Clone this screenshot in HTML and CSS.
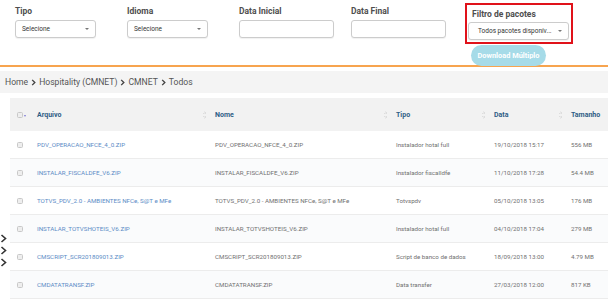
FILE: index.html
```html
<!DOCTYPE html>
<html lang="pt-BR">
<head>
  <meta charset="UTF-8">
  <title>Pacotes - CMNET</title>
  <link rel="stylesheet" href="styles.css">
</head>
<body>
  <header class="filters">
    <div class="field w-select">
      <label>Tipo</label>
      <div class="select"><span>Selecione</span><i class="caret"></i></div>
    </div>
    <div class="field w-select">
      <label>Idioma</label>
      <div class="select"><span>Selecione</span><i class="caret"></i></div>
    </div>
    <div class="field w-date">
      <label>Data Inicial</label>
      <div class="input"></div>
    </div>
    <div class="field w-date">
      <label>Data Final</label>
      <div class="input"></div>
    </div>
    <div class="field-pack">
      <div class="highlight">
        <label>Filtro de pacotes</label>
        <div class="select"><span>Todos pacotes disponív...</span><i class="caret"></i></div>
      </div>
      <button class="btn-download">Download Múltiplo</button>
    </div>
  </header>

  <nav class="breadcrumb">
    <span>Home</span>
    <svg class="sep" viewBox="0 0 5 8"><path d="M1 1l3 3-3 3" /></svg>
    <span>Hospitality (CMNET)</span>
    <svg class="sep" viewBox="0 0 5 8"><path d="M1 1l3 3-3 3" /></svg>
    <span>CMNET</span>
    <svg class="sep" viewBox="0 0 5 8"><path d="M1 1l3 3-3 3" /></svg>
    <span>Todos</span>
  </nav>

  <div class="side-toggle">
    <svg viewBox="0 0 7 9"><path d="M1.5 1l4 3.5-4 3.5" /></svg>
    <svg viewBox="0 0 7 9"><path d="M1.5 1l4 3.5-4 3.5" /></svg>
    <svg viewBox="0 0 7 9"><path d="M1.5 1l4 3.5-4 3.5" /></svg>
  </div>

  <main class="content">
    <table class="files">
      <colgroup>
        <col class="c-check"><col class="c-file"><col class="c-name"><col class="c-type"><col class="c-date"><col class="c-size">
      </colgroup>
      <thead>
        <tr>
          <th><span class="cb"></span><i class="cb-caret"></i></th>
          <th class="sort">Arquivo</th>
          <th class="sort">Nome</th>
          <th class="sort">Tipo</th>
          <th class="sort">Data</th>
          <th>Tamanho</th>
        </tr>
      </thead>
      <tbody>
        <tr>
          <td><span class="cb"></span></td>
          <td><a href="#">PDV_OPERACAO_NFCE_4_0.ZIP</a></td>
          <td>PDV_OPERACAO_NFCE_4_0.ZIP</td>
          <td>Instalador hotal full</td>
          <td>19/10/2018 15:17</td>
          <td>556 MB</td>
        </tr>
        <tr>
          <td><span class="cb"></span></td>
          <td><a href="#">INSTALAR_FISCALDFE_V6.ZIP</a></td>
          <td>INSTALAR_FISCALDFE_V6.ZIP</td>
          <td>Instalador fiscalldfe</td>
          <td>11/10/2018 17:28</td>
          <td>54.4 MB</td>
        </tr>
        <tr>
          <td><span class="cb"></span></td>
          <td><a href="#">TOTVS_PDV_2.0 - AMBIENTES NFCe, S@T e MFe</a></td>
          <td>TOTVS_PDV_2.0 - AMBIENTES NFCe, S@T e MFe</td>
          <td>Totvspdv</td>
          <td>05/10/2018 13:05</td>
          <td>176 MB</td>
        </tr>
        <tr>
          <td><span class="cb"></span></td>
          <td><a href="#">INSTALAR_TOTVSHOTEIS_V6.ZIP</a></td>
          <td>INSTALAR_TOTVSHOTEIS_V6.ZIP</td>
          <td>Instalador hotal full</td>
          <td>04/10/2018 17:04</td>
          <td>279 MB</td>
        </tr>
        <tr>
          <td><span class="cb"></span></td>
          <td><a href="#">CMSCRIPT_SCR201809013.ZIP</a></td>
          <td>CMSCRIPT_SCR201809013.ZIP</td>
          <td>Script de banco de dados</td>
          <td>18/09/2018 13:00</td>
          <td>4.79 MB</td>
        </tr>
        <tr>
          <td><span class="cb"></span></td>
          <td><a href="#">CMDATATRANSF.ZIP</a></td>
          <td>CMDATATRANSF.ZIP</td>
          <td>Data transfer</td>
          <td>27/03/2018 12:00</td>
          <td>817 KB</td>
        </tr>
      </tbody>
    </table>
  </main>
</body>
</html>
```

FILE: styles.css
```css
body {
  font-family: Roboto, "Liberation Sans", Arial, sans-serif;
  background: #fff;
  color: #666;
  margin: 0;
  padding: 0;
  width: 608px;
  height: 302px;
  overflow: hidden;
  position: relative;
}

/* filter bar */
.filters {
  display: flex;
  align-items: flex-start;
  padding: 6px 0 0 15px;
  height: 59px;
  border-bottom: 2px solid #f7a44f;
}
.field {
  display: flex;
  flex-direction: column;
}
.field.w-select {
  width: 81px;
  margin-right: 31px;
}
.field.w-date {
  width: 95px;
  margin-right: 17px;
}
.field.w-date + .field.w-date {
  margin-right: 19px;
}
label {
  font-size: 8.5px;
  font-weight: bold;
  color: #4e4e4e;
  height: 14px;
  line-height: 11px;
}
.select, .input {
  box-sizing: border-box;
  height: 18px;
  border: 1px solid #ccc;
  border-radius: 3px;
  background: #fff;
  box-shadow: 0 1px 1px rgba(0,0,0,0.06);
}
.select {
  display: flex;
  align-items: center;
  justify-content: space-between;
  padding: 0 6px 0 6px;
  font-size: 6.5px;
  color: #333;
}
.caret {
  width: 0;
  height: 0;
  border-left: 2px solid transparent;
  border-right: 2px solid transparent;
  border-top: 2.5px solid #777;
}

.field-pack {
  display: flex;
  flex-direction: column;
  align-items: flex-start;
  margin-top: -3px;
}
.highlight {
  width: 108px;
  box-sizing: border-box;
  border: 2px solid #e0121a;
  padding: 4px 2px 2px 1px;
  display: flex;
  flex-direction: column;
}
.highlight label {
  padding-left: 4px;
  height: 13px;
}
.highlight .select {
  padding-left: 9px;
}
.btn-download {
  margin: 1px 0 0 6px;
  width: 75px;
  height: 21px;
  border: 0;
  border-radius: 11px;
  background: #a6dbe8;
  color: #fff;
  font-family: inherit;
  font-size: 7.4px;
  font-weight: bold;
  padding: 0;
}

/* breadcrumb */
.breadcrumb {
  margin-top: 4px;
  height: 22px;
  background: #f4f4f4;
  display: flex;
  align-items: center;
  gap: 3px;
  padding-left: 5px;
  font-size: 8.6px;
  color: #555;
}
.breadcrumb .sep {
  width: 5px;
  height: 7px;
  fill: none;
  stroke: #444;
  stroke-width: 1.6;
}

/* table */
.content {
  padding: 5px 0 0 10px;
}
.files {
  width: 598px;
  table-layout: fixed;
  border-collapse: collapse;
}
.c-check { width: 22px; }
.c-file { width: 178px; }
.c-name { width: 181px; }
.c-type { width: 98px; }
.c-date { width: 77px; }
.c-size { width: 42px; }

.files th {
  background: #f2f2f2;
  height: 33px;
  padding: 0 0 0 5px;
  text-align: left;
  font-size: 7px;
  font-weight: bold;
  color: #2f5d86;
  white-space: nowrap;
  position: relative;
}
.files th.sort::after {
  content: "";
  position: absolute;
  right: 4px;
  top: 13px;
  width: 3px;
  height: 8px;
  background:
    linear-gradient(to bottom right, transparent 50%, #ddd 50%) left top / 1.5px 3px no-repeat,
    linear-gradient(to bottom left, transparent 50%, #ddd 50%) right top / 1.5px 3px no-repeat,
    linear-gradient(to top right, transparent 50%, #ddd 50%) left bottom / 1.5px 3px no-repeat,
    linear-gradient(to top left, transparent 50%, #ddd 50%) right bottom / 1.5px 3px no-repeat;
}
.files td {
  height: 27px;
  padding: 0 0 0 5px;
  font-size: 6.2px;
  color: #707070;
  white-space: nowrap;
  overflow: hidden;
  border-bottom: 1px solid #ececec;
}
.files tbody tr:nth-child(even) td {
  background: #fafbfc;
}
.files a {
  color: #5a8bc6;
  text-decoration: none;
}
.cb {
  display: inline-block;
  vertical-align: middle;
  box-sizing: border-box;
  width: 6px;
  height: 6px;
  margin-left: 2px;
  border: 1px solid #c8c8c8;
  border-radius: 1.5px;
  background: #eee;
}
.cb-caret {
  display: inline-block;
  vertical-align: middle;
  margin: 3px 0 0 1px;
  width: 0;
  height: 0;
  border-left: 1.5px solid transparent;
  border-right: 1.5px solid transparent;
  border-top: 2px solid #7d7ad6;
}

/* collapsed side panel toggles */
.side-toggle {
  position: absolute;
  left: 0;
  top: 234px;
  display: flex;
  flex-direction: column;
  gap: 3px;
}
.side-toggle svg {
  width: 7px;
  height: 9px;
  fill: none;
  stroke: #333;
  stroke-width: 1.6;
}
```
